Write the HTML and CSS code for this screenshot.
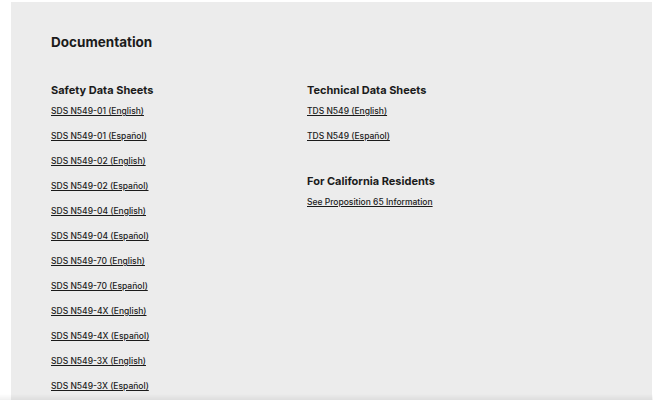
FILE: index.html
```html
<!DOCTYPE html>
<html>
<head>
<meta charset="utf-8">
<link rel="stylesheet" href="styles.css">
</head>
<body>
<section class="panel">
  <h2 class="title">Documentation</h2>
  <div class="cols">
    <div class="col">
      <h3 class="head">Safety Data Sheets</h3>
      <ul class="links">
        <li><a href="#">SDS N549-01 (English)</a></li>
        <li><a href="#">SDS N549-01 (Español)</a></li>
        <li><a href="#">SDS N549-02 (English)</a></li>
        <li><a href="#">SDS N549-02 (Español)</a></li>
        <li><a href="#">SDS N549-04 (English)</a></li>
        <li><a href="#">SDS N549-04 (Español)</a></li>
        <li><a href="#">SDS N549-70 (English)</a></li>
        <li><a href="#">SDS N549-70 (Español)</a></li>
        <li><a href="#">SDS N549-4X (English)</a></li>
        <li><a href="#">SDS N549-4X (Español)</a></li>
        <li><a href="#">SDS N549-3X (English)</a></li>
        <li><a href="#">SDS N549-3X (Español)</a></li>
      </ul>
    </div>
    <div class="col">
      <h3 class="head">Technical Data Sheets</h3>
      <ul class="links">
        <li><a href="#">TDS N549 (English)</a></li>
        <li><a href="#">TDS N549 (Español)</a></li>
      </ul>
      <h3 class="head head-gap">For California Residents</h3>
      <ul class="links">
        <li><a href="#">See Proposition 65 Information</a></li>
      </ul>
    </div>
  </div>
</section>
<div class="fade"></div>
</body>
</html>
```
FILE: styles.css
```css
* { box-sizing: border-box; }
html, body { margin: 0; padding: 0; background: #ffffff; }
body {
  font-family: Inter, "Liberation Sans", Arial, sans-serif;
  color: #1b1b1b;
  height: 400px;
  overflow: hidden;
}
.panel {
  margin: 2px 0 0 11px;
  width: 641px;
  height: 398px;
  overflow: hidden;
  background: #ececec;
  padding: 31px 40px 0 40px;
}
.title {
  margin: 0;
  font-size: 13.5px;
  font-weight: 700;
  line-height: 18px;
}
.cols {
  display: grid;
  grid-template-columns: 256px 1fr;
  margin-top: 32px;
}
.head {
  margin: 0;
  font-size: 11px;
  font-weight: 700;
  line-height: 14px;
}
.head-gap { margin-top: 32px; }
.links {
  list-style: none;
  margin: 0;
  padding: 0;
}
.links li {
  font-size: 8.5px;
  line-height: 12px;
  margin-top: 13px;
}
.links li:first-child { margin-top: 8px; }
.links a {
  color: #1b1b1b;
  font-weight: 500;
  text-decoration: underline;
  text-underline-offset: 1px;
}
.fade {
  position: fixed;
  left: 0;
  right: 0;
  bottom: 0;
  height: 6px;
  background: linear-gradient(to bottom, rgba(0,0,0,0), rgba(0,0,0,0.06));
}
```
